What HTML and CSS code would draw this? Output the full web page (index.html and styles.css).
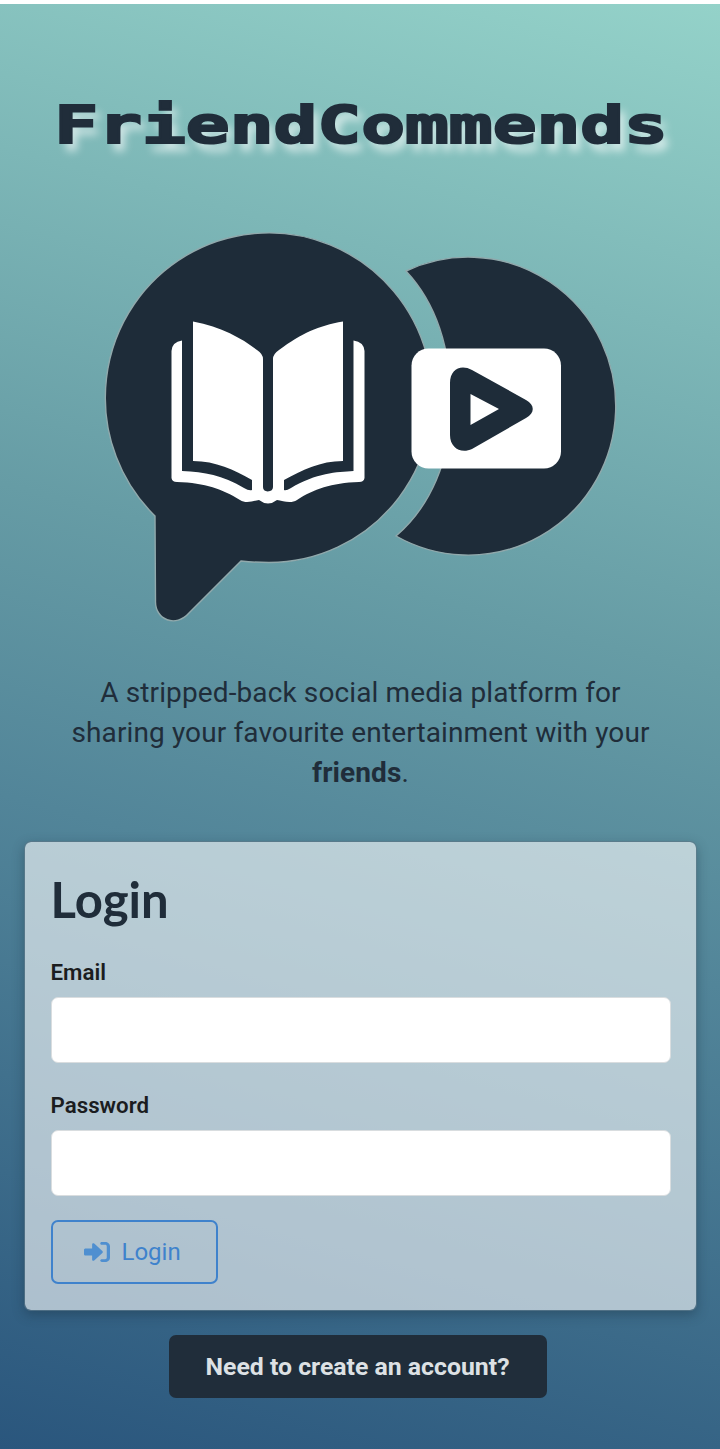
FILE: index.html
```html
<!DOCTYPE html>
<html lang="en">
<head>
<meta charset="utf-8">
<title>FriendCommends</title>
<link rel="stylesheet" href="styles.css">
</head>
<body>
<main class="page">
  <h1 class="brand"><span class="brand-text">FriendCommends</span></h1>
  <svg class="logo" viewBox="98 225 524 402" aria-hidden="true">
    <g fill="#1e2c39" stroke="#91a9ac" stroke-width="1.4">
      <path d="M155 516A163.500 164.800 0 1 1 269 562.500Q255 562.500 241 561L189 613C176 628 155 620 155.500 601Z"/>
      <path d="M406 271A147.500 149 0 1 1 396 536C430 507 451 460 451 405C451 348 436 303 406 271Z"/>
    </g>
    <rect x="411.500" y="348.500" width="149.500" height="120" rx="17" fill="#fff"/>
    <path d="M450 383C450 369 461 364 472 370L526 400C535 405 535 413 526 418L472 449C461 454 450 448 450 435ZM470.500 394V425L499 409Z" fill="#1e2c39" fill-rule="evenodd"/>
    <path d="M193 321.500C222 327 243 339 257 350Q263 354 263 359V487Q263 491 267.700 491.500Q273 491 273 487V359Q273 354 279 350C302 333 318 326 343 321.500V461C320 461 303 470 284 480V490Q286 491 291 488C316 473 337 472 353.500 471V340.500Q364 342 364.500 351V478Q364 482 359 482C331 483 314 489 297 500C291 504 283 501 277 500Q268 507 259 500C253 501 246 504 240 500C222 489 206 483 177 482Q172 482 171.500 478V351Q172 342 182 340.500V471C205 472 222 475 244 488Q249 491 252 490V480C234 470 216 461 193 461Z" fill="#fff"/>
  </svg>
  <p class="tagline">A stripped-back social media platform for<br>sharing your favourite entertainment with your<br><strong>friends</strong>.</p>
  <form class="card">
    <h2 class="card-title">Login</h2>
    <label class="label" for="email">Email</label>
    <input class="field" id="email" type="email">
    <label class="label" for="password">Password</label>
    <input class="field" id="password" type="password">
    <button class="submit" type="button">
      <svg class="submit-icon" viewBox="0 32 512 448" preserveAspectRatio="none" aria-hidden="true"><path fill="currentColor" d="M352 96h64c17.700 0 32 14.300 32 32v256c0 17.700-14.300 32-32 32h-64c-17.700 0-32 14.300-32 32s14.300 32 32 32h64c53 0 96-43 96-96V128c0-53-43-96-96-96h-64c-17.700 0-32 14.300-32 32s14.300 32 32 32zm9.400 182.600c12.500-12.500 12.500-32.800 0-45.300L201 65c-15-15-41-4-41 17v94H32c-17.700 0-32 14.300-32 32v96c0 17.700 14.300 32 32 32h128v94c0 21 26 32 41 17z"/></svg>
      <span>Login</span>
    </button>
  </form>
  <a class="signup">Need to create an account?</a>
</main>
</body>
</html>
```
FILE: styles.css
```css
* { box-sizing: border-box; }
body {
  margin: 0;
  background: #fff;
  font-family: Roboto, "Liberation Sans", sans-serif;
  color: #202d3a;
}
.page {
  min-height: 1445px;
  margin-top: 4px;
  padding: 87px 24px 0;
  display: flex;
  flex-direction: column;
  align-items: center;
  background: linear-gradient(15deg, #2a567d 0%, #528599 40%, #669ca5 59%, #94d2c9 100%);
}
.brand {
  margin: 0 0 0 3px;
  height: 68px;
  font: 700 52px/68px "DejaVu Sans Mono", monospace;
  text-shadow: 4px 8px 7px rgba(255, 255, 255, .65);
  -webkit-text-stroke: 2px #202d3a;
}
.brand-text { display: inline-block; transform: scaleX(1.400); }
.logo {
  width: 524px;
  height: 402px;
  margin-top: 66px;
  flex: none;
}
.tagline {
  margin: 46px 0 0 1px;
  font-size: 28px;
  line-height: 40px;
  letter-spacing: .12px;
  text-align: center;
  white-space: nowrap;
}
.card {
  width: 673px;
  height: 470px;
  margin-top: 48px;
  padding: 24px 25px 25px 26px;
  border: 1px solid rgba(90, 115, 130, .65);
  border-radius: 7px;
  background: rgba(255, 255, 255, .6);
  background-clip: padding-box;
  box-shadow: 0 4px 12px rgba(20, 40, 55, .35);
}
.card-title {
  margin: 0 0 26px;
  font: 700 49px/66px Lato, sans-serif;
}
.label {
  display: block;
  height: 27px;
  margin-bottom: 12px;
  font-size: 22.300px;
  font-weight: 600;
  line-height: 28px;
  color: #1b1d1f;
}
.field {
  display: block;
  width: 620px;
  height: 66px;
  margin: 0 0 28px;
  border: 1.500px solid #d9dddf;
  border-radius: 7px;
  background: #fff;
}
.submit {
  display: flex;
  align-items: center;
  gap: 12px;
  width: 167px;
  height: 64px;
  margin-top: -4px;
  padding: 0 31px;
  border: 2px solid #3f82cc;
  border-radius: 7px;
  background: transparent;
  font: 400 24px/32px Roboto, sans-serif;
  color: #3f82cc;
}
.submit-icon { width: 26px; height: 20px; color: #4f8fd0; flex: none; }
.signup {
  width: 378px;
  height: 63px;
  margin: 24px 5px 0 0;
  border-radius: 7px;
  background: #202d3a;
  color: #dde1e4;
  font-size: 24.800px;
  font-weight: 700;
  line-height: 64px;
  text-align: center;
}
```
